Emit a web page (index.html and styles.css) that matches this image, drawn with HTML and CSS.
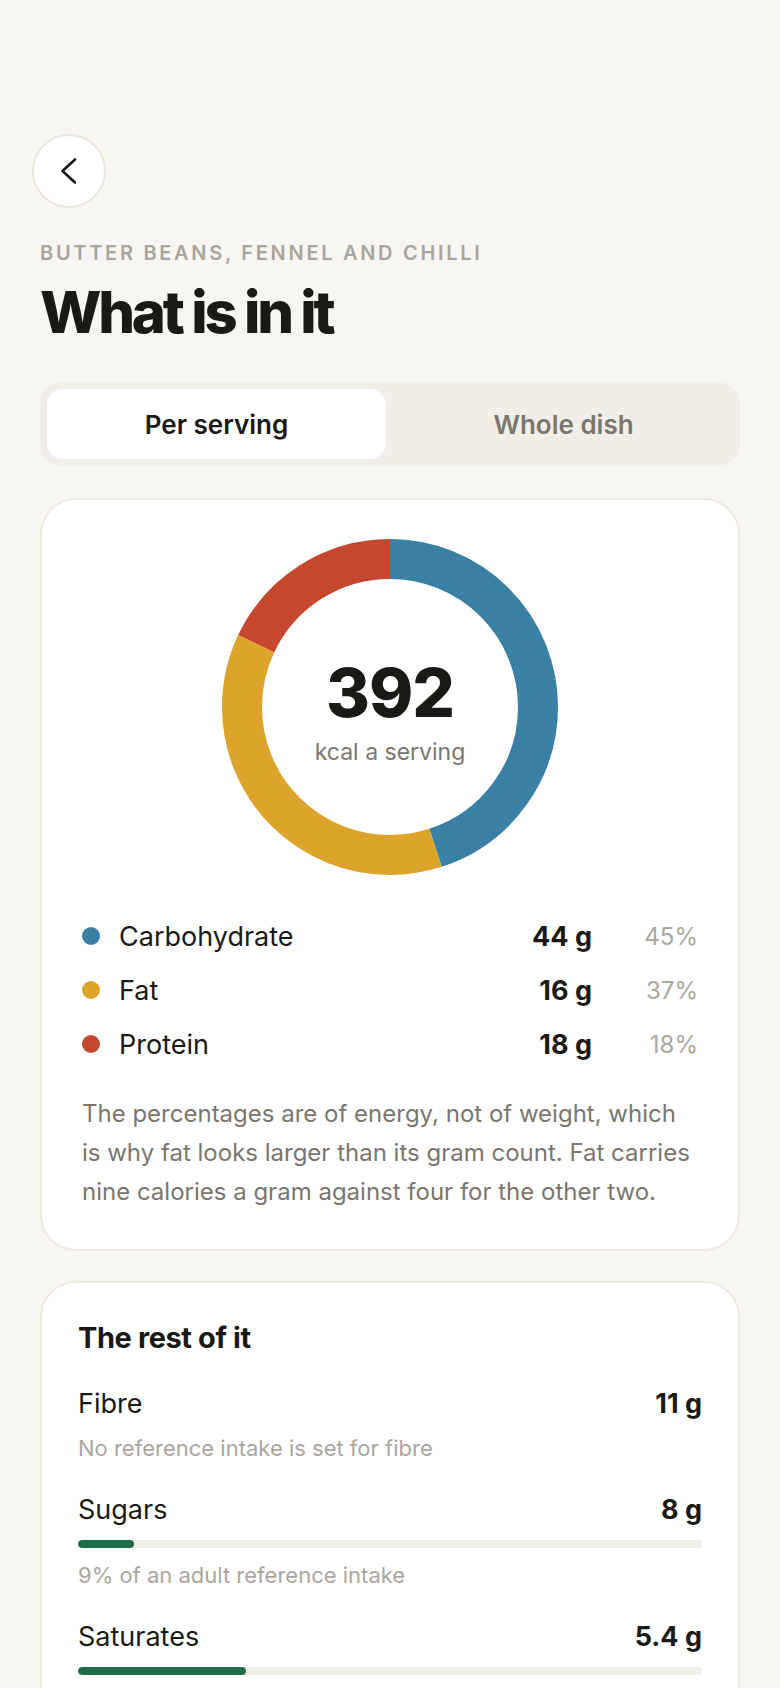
FILE: index.html
```html
<!DOCTYPE html>
<html lang="en">
<head>
    <meta charset="UTF-8">
    <meta name="viewport" content="width=device-width, initial-scale=1.0">
    <title>What is in it</title>
    <link rel="stylesheet" href="styles.css">
</head>
<body>
    <div class="page">
        <button class="back-btn" aria-label="Back">
            <svg width="20" height="28" viewBox="0 0 20 28">
                <path d="M16 2.5 L3.5 14 L16 25.5" fill="none" stroke="#1a1916" stroke-width="2.6" stroke-linecap="round" stroke-linejoin="round"/>
            </svg>
        </button>

        <p class="eyebrow">Butter beans, fennel and chilli</p>
        <h1 class="title">What is in it</h1>

        <div class="toggle">
            <button class="toggle-btn active">Per serving</button>
            <button class="toggle-btn">Whole dish</button>
        </div>

        <div class="card macros">
            <div class="donut">
                <svg width="336" height="336" viewBox="0 0 336 336">
                    <g transform="rotate(-90 168 168)">
                        <circle cx="168" cy="168" r="148" fill="none" stroke="#3a7fa4" stroke-width="40" stroke-dasharray="418.5 929.9" stroke-dashoffset="0"/>
                        <circle cx="168" cy="168" r="148" fill="none" stroke="#dca42b" stroke-width="40" stroke-dasharray="344.1 929.9" stroke-dashoffset="-418.5"/>
                        <circle cx="168" cy="168" r="148" fill="none" stroke="#c4472e" stroke-width="40" stroke-dasharray="167.3 929.9" stroke-dashoffset="-762.6"/>
                    </g>
                </svg>
                <div class="donut-label">
                    <div class="kcal">392</div>
                    <div class="kcal-unit">kcal a serving</div>
                </div>
            </div>

            <div class="legend">
                <div class="legend-row">
                    <span class="dot carb"></span>
                    <span class="legend-name">Carbohydrate</span>
                    <span class="legend-value">44 g</span>
                    <span class="legend-pct">45%</span>
                </div>
                <div class="legend-row">
                    <span class="dot fat"></span>
                    <span class="legend-name">Fat</span>
                    <span class="legend-value">16 g</span>
                    <span class="legend-pct">37%</span>
                </div>
                <div class="legend-row">
                    <span class="dot protein"></span>
                    <span class="legend-name">Protein</span>
                    <span class="legend-value">18 g</span>
                    <span class="legend-pct">18%</span>
                </div>
            </div>

            <p class="note">The percentages are of energy, not of weight, which is why fat looks larger than its gram count. Fat carries nine calories a gram against four for the other two.</p>
        </div>

        <div class="card rest">
            <h2 class="rest-title">The rest of it</h2>

            <div class="nutrient">
                <div class="nutrient-head">
                    <span>Fibre</span>
                    <strong>11 g</strong>
                </div>
                <p class="nutrient-note">No reference intake is set for fibre</p>
            </div>

            <div class="nutrient">
                <div class="nutrient-head">
                    <span>Sugars</span>
                    <strong>8 g</strong>
                </div>
                <div class="bar"><div class="bar-fill" style="width: 9%;"></div></div>
                <p class="nutrient-note">9% of an adult reference intake</p>
            </div>

            <div class="nutrient">
                <div class="nutrient-head">
                    <span>Saturates</span>
                    <strong>5.4 g</strong>
                </div>
                <div class="bar"><div class="bar-fill" style="width: 27%;"></div></div>
                <p class="nutrient-note">27% of an adult reference intake</p>
            </div>
        </div>
    </div>
</body>
</html>
```

FILE: styles.css
```css
body {
    font-family: Inter, "Noto Sans", sans-serif;
    margin: 0;
    padding: 0;
    background-color: #f8f6f2;
    color: #1a1916;
}

.page {
    padding: 134px 40px 40px;
}

.back-btn {
    width: 74px;
    height: 74px;
    margin-left: -8px;
    border-radius: 50%;
    border: 2px solid #ebe6de;
    background-color: #fff;
    display: flex;
    align-items: center;
    justify-content: center;
    padding: 0;
    cursor: pointer;
}

.eyebrow {
    margin: 33px 0 0;
    font-size: 20px;
    line-height: 24px;
    font-weight: 600;
    letter-spacing: 2.7px;
    text-transform: uppercase;
    color: #a9a59c;
}

.title {
    margin: 15px 0 0;
    font-size: 58px;
    line-height: 64px;
    font-weight: 800;
    letter-spacing: -3.2px;
}

.toggle {
    margin-top: 38px;
    display: grid;
    grid-template-columns: 1fr 1fr;
    gap: 8px;
    padding: 7px;
    border-radius: 22px;
    background-color: #f1eee8;
}

.toggle-btn {
    height: 70px;
    border: none;
    border-radius: 16px;
    background: transparent;
    font-family: inherit;
    font-size: 26px;
    font-weight: 600;
    color: #7a766e;
    cursor: pointer;
}

.toggle-btn.active {
    background-color: #fff;
    color: #1a1916;
}

.card {
    margin-top: 32px;
    background-color: #fff;
    border: 2px solid #eee9e1;
    border-radius: 36px;
}

.macros {
    padding: 39px 40px 38px;
}

.donut {
    position: relative;
    width: 336px;
    height: 336px;
    margin: 0 auto;
}

.donut svg {
    display: block;
}

.donut-label {
    position: absolute;
    inset: 0;
    padding-top: 10px;
    display: flex;
    flex-direction: column;
    align-items: center;
    justify-content: center;
    text-align: center;
}

.kcal {
    font-size: 67px;
    line-height: 72px;
    font-weight: 800;
    letter-spacing: -1px;
}

.kcal-unit {
    font-size: 23px;
    line-height: 30px;
    color: #7a766e;
    margin-top: 8px;
}

.legend {
    margin-top: 34px;
}

.legend-row {
    display: flex;
    align-items: center;
    height: 54px;
    font-size: 27px;
}

.dot {
    width: 18px;
    height: 18px;
    border-radius: 50%;
    margin-right: 19px;
}

.dot.carb { background-color: #3a7fa4; }
.dot.fat { background-color: #dca42b; }
.dot.protein { background-color: #c4472e; }

.legend-name {
    flex: 1;
}

.legend-value {
    font-weight: 700;
}

.legend-pct {
    width: 106px;
    text-align: right;
    font-size: 24px;
    color: #aaa79f;
}

.note {
    margin: 23px 0 0;
    font-size: 24px;
    line-height: 39px;
    color: #7a766e;
}

.card.rest {
    margin-top: 30px;
    padding: 38px 36px 40px;
}

.rest-title {
    margin: 0;
    font-size: 29px;
    line-height: 34px;
    font-weight: 700;
    letter-spacing: -0.4px;
}

.nutrient {
    margin-top: 30px;
}

.rest-title + .nutrient {
    margin-top: 32px;
}

.nutrient-head {
    display: flex;
    justify-content: space-between;
    font-size: 27px;
    line-height: 34px;
}

.nutrient-head strong {
    font-weight: 700;
}

.bar {
    margin-top: 13px;
    height: 8px;
    border-radius: 4px;
    background-color: #f1eee8;
    overflow: hidden;
}

.bar-fill {
    height: 100%;
    border-radius: 4px;
    background-color: #1f6b4a;
}

.nutrient-note {
    margin: 12px 0 0;
    font-size: 22px;
    line-height: 30px;
    color: #aaa69e;
}
```
